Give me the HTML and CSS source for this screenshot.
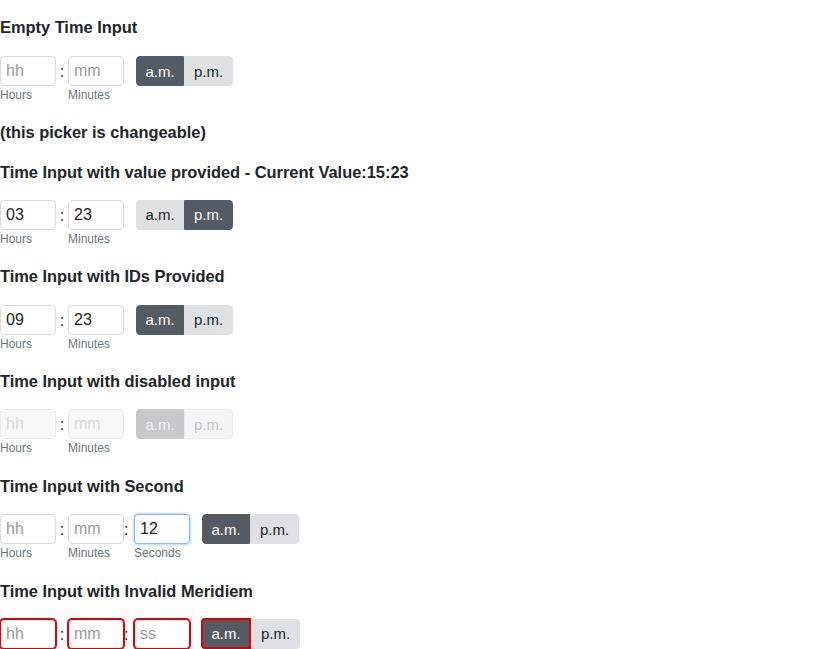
FILE: index.html
```html
<!DOCTYPE html>
<html>
<head>
<meta charset="utf-8">
<link rel="stylesheet" href="styles.css">
</head>
<body>
<h3 class="title first">Empty Time Input</h3>
<div class="picker">
  <div class="field"><input class="box" placeholder="hh"><span class="lbl">Hours</span></div>
  <span class="colon">:</span>
  <div class="field"><input class="box" placeholder="mm"><span class="lbl">Minutes</span></div>
  <div class="meridiem"><button class="mbtn on">a.m.</button><button class="mbtn">p.m.</button></div>
</div>
<h3 class="title note">(this picker is changeable)</h3>

<h3 class="title">Time Input with value provided - Current Value:15:23</h3>
<div class="picker">
  <div class="field"><input class="box" placeholder="hh" value="03"><span class="lbl">Hours</span></div>
  <span class="colon">:</span>
  <div class="field"><input class="box" placeholder="mm" value="23"><span class="lbl">Minutes</span></div>
  <div class="meridiem"><button class="mbtn">a.m.</button><button class="mbtn on">p.m.</button></div>
</div>

<h3 class="title">Time Input with IDs Provided</h3>
<div class="picker">
  <div class="field"><input class="box" placeholder="hh" value="09"><span class="lbl">Hours</span></div>
  <span class="colon">:</span>
  <div class="field"><input class="box" placeholder="mm" value="23"><span class="lbl">Minutes</span></div>
  <div class="meridiem"><button class="mbtn on">a.m.</button><button class="mbtn">p.m.</button></div>
</div>

<h3 class="title">Time Input with disabled input</h3>
<div class="picker">
  <div class="field"><input class="box" placeholder="hh" disabled><span class="lbl">Hours</span></div>
  <span class="colon">:</span>
  <div class="field"><input class="box" placeholder="mm" disabled><span class="lbl">Minutes</span></div>
  <div class="meridiem"><button class="mbtn on" disabled>a.m.</button><button class="mbtn" disabled>p.m.</button></div>
</div>

<h3 class="title">Time Input with Second</h3>
<div class="picker">
  <div class="field"><input class="box" placeholder="hh"><span class="lbl">Hours</span></div>
  <span class="colon">:</span>
  <div class="field"><input class="box" placeholder="mm"><span class="lbl">Minutes</span></div>
  <span class="colon narrow">:</span>
  <div class="field"><input class="box focus" placeholder="ss" value="12"><span class="lbl">Seconds</span></div>
  <div class="meridiem"><button class="mbtn on">a.m.</button><button class="mbtn">p.m.</button></div>
</div>

<h3 class="title">Time Input with Invalid Meridiem</h3>
<div class="picker">
  <div class="field"><input class="box bad" placeholder="hh"><span class="lbl">Hours</span></div>
  <span class="colon">:</span>
  <div class="field"><input class="box bad" placeholder="mm"><span class="lbl">Minutes</span></div>
  <span class="colon narrow">:</span>
  <div class="field"><input class="box bad" placeholder="ss"><span class="lbl">Seconds</span></div>
  <div class="meridiem"><button class="mbtn on bad">a.m.</button><button class="mbtn">p.m.</button></div>
</div>
</body>
</html>
```
FILE: styles.css
```css
body {
  margin: 0;
  font-family: "Liberation Sans", Arial, sans-serif;
  color: #212529;
  background: #fff;
}
.title {
  font-size: 16.4px;
  font-weight: bold;
  line-height: 21px;
  margin: 18.6px 0 17.2px;
}
.title.first {
  margin-top: 16.5px;
  margin-bottom: 18.5px;
}
.title.note {
  margin-top: 18px;
  margin-bottom: 18px;
}
.picker {
  display: flex;
  align-items: flex-start;
}
.field {
  display: flex;
  flex-direction: column;
  width: 56px;
}
.box {
  box-sizing: border-box;
  width: 56px;
  height: 30px;
  margin: 0;
  padding: 0 5px;
  border: 1px solid #dadada;
  border-radius: 4px;
  font-family: "Liberation Sans", Arial, sans-serif;
  font-size: 16px;
  color: #212529;
  background: #fff;
  outline: none;
}
.box::placeholder {
  color: #9a9a9a;
}
.box:disabled {
  background: #f8f8f8;
  border-color: #e8e8e8;
}
.box:disabled::placeholder {
  color: #d8d8d8;
}
.box.focus {
  border-color: #80bdff;
  box-shadow: 0 0 2px 1px rgba(128, 189, 255, 0.6);
}
.box.bad {
  border-color: #e00000;
  box-shadow: 0 0 0 1px #e00000;
}
.lbl {
  font-size: 12px;
  line-height: 18px;
  color: #6c757d;
  white-space: nowrap;
}
.colon {
  width: 12px;
  text-align: center;
  font-size: 16px;
  line-height: 30px;
  height: 30px;
  padding-top: 1px;
  box-sizing: border-box;
}
.colon.narrow {
  width: 10px;
  text-align: left;
}
.meridiem {
  display: flex;
  margin-left: 12px;
  height: 30px;
}
.mbtn {
  height: 30px;
  margin: 0;
  padding: 0;
  border: 1px solid #dddfe2;
  background: #dfe0e2;
  color: #212529;
  font-family: "Liberation Sans", Arial, sans-serif;
  font-size: 15px;
}
.mbtn:first-child {
  border-radius: 4px 0 0 4px;
  width: 48px;
}
.mbtn:last-child {
  border-radius: 0 4px 4px 0;
  width: 49px;
}
.mbtn.on {
  background: #545b62;
  border-color: #545b62;
  color: #fff;
}
.mbtn:disabled {
  background: #f5f5f5;
  border-color: #eeeeee;
  color: #c4c4c4;
}
.mbtn.on:disabled {
  background: #c7c8c9;
  border-color: #c7c8c9;
  color: #f0f0f0;
}
.mbtn.bad {
  border: 2px solid #e00000;
  margin-left: -1px;
  margin-top: -1px;
  width: 50px;
  height: 31px;
}
```
